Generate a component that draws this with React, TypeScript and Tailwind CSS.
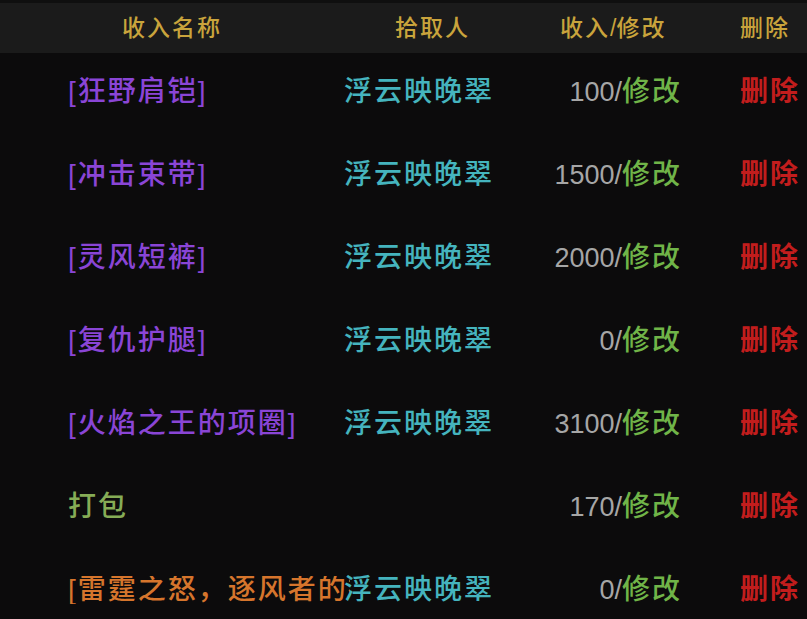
import React from "react";

type Row = {
  name: string;
  nameColor: string;
  picker: string;
  amount: string;
  clip?: boolean;
};

const rows: Row[] = [
  { name: "[狂野肩铠]", nameColor: "text-[#8a45d6]", picker: "浮云映晚翠", amount: "100" },
  { name: "[冲击束带]", nameColor: "text-[#8a45d6]", picker: "浮云映晚翠", amount: "1500" },
  { name: "[灵风短裤]", nameColor: "text-[#8a45d6]", picker: "浮云映晚翠", amount: "2000" },
  { name: "[复仇护腿]", nameColor: "text-[#8a45d6]", picker: "浮云映晚翠", amount: "0" },
  { name: "[火焰之王的项圈]", nameColor: "text-[#8a45d6]", picker: "浮云映晚翠", amount: "3100" },
  { name: "打包", nameColor: "text-[#86ac56]", picker: "", amount: "170" },
  { name: "[雷霆之怒，逐风者的祝福之剑]", nameColor: "text-[#d6752c]", picker: "浮云映晚翠", amount: "0", clip: true },
];

const font = { fontFamily: '"Liberation Sans", "Noto Sans CJK SC", sans-serif' };

export default function App() {
  return (
    <div
      className="w-[807px] h-[619px] overflow-hidden bg-[#0c0b0c] flex flex-col"
      style={font}
    >
      <div className="h-[3px] shrink-0 bg-[#0f0f0f]" />
      <div className="h-[50px] shrink-0 bg-[#1b1b1b] flex items-center text-[23px] tracking-[2px] text-[#c9a43c] leading-none font-medium">
        <div className="w-[395px] pl-[122px]">收入名称</div>
        <div className="w-[165px]">拾取人</div>
        <div className="w-[180px]">
          收入<span className="tracking-normal">/</span>修改
        </div>
        <div>删除</div>
      </div>
      <div className="flex flex-col shrink-0">
        {rows.map((r, i) => (
          <div key={i} className="h-[83px] shrink-0 pb-[5px] flex items-center text-[28px] leading-none tracking-[2px] font-medium">
            <div className="w-[344px] pl-[68px] shrink-0">
              <div
                className={
                  r.clip
                    ? `w-[282px] overflow-hidden whitespace-nowrap ${r.nameColor}`
                    : `whitespace-nowrap ${r.nameColor}`
                }
              >
                {r.name}
              </div>
            </div>
            <div className="w-[200px] shrink-0 relative text-[#45b4be] whitespace-nowrap">{r.picker}</div>
            <div className="w-[138px] shrink-0 text-right whitespace-nowrap">
              <span className="text-[27px] tracking-normal font-normal text-[#a6a6a6]">{r.amount}/</span>
              <span className="text-[#70b448]">修改</span>
            </div>
            <div className="pl-[58px] text-[#c21d1d] font-bold whitespace-nowrap">删除</div>
          </div>
        ))}
      </div>
    </div>
  );
}
